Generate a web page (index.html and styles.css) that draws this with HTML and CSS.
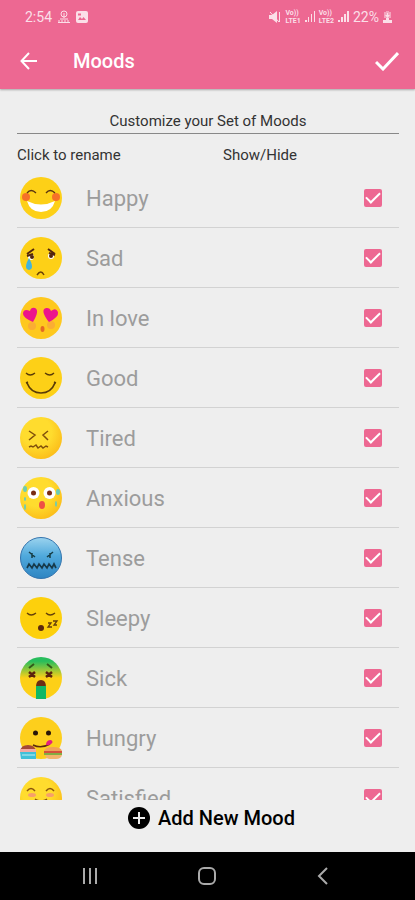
FILE: index.html
```html
<!DOCTYPE html>
<html lang="en">

<head>
    <meta charset="UTF-8">
    <meta name="viewport" content="width=device-width, initial-scale=1.0">
    <title>Moods</title>
    <link rel="stylesheet" href="styles.css">
</head>

<body>
    <header class="header">
        <div class="status">
            <div class="status-group">
                <span>2:54</span>
                <svg width="14" height="14" viewBox="0 0 14 14" fill="none" stroke="currentColor">
                    <circle cx="7" cy="4" r="3" />
                    <path d="M7 3v5M3 9h8M1 12.500h12" />
                    <path d="M1 11h12" stroke-dasharray="2 1" />
                </svg>
                <svg width="12" height="12" viewBox="0 0 12 12">
                    <rect width="12" height="12" rx="2" fill="currentColor" />
                    <path d="M2 9l2-3 2 2 1.500-2L10 9z" fill="#ed6892" />
                    <path d="M2 2.500h3v2H2z" fill="#ed6892" />
                </svg>
            </div>
            <div class="status-group right">
                <svg width="12" height="12" viewBox="0 0 12 12" fill="currentColor">
                    <path d="M0 4h3l5-4v12L3 8H0z" />
                    <path d="M1 1l9 10M10.500 1v10" stroke="currentColor" />
                </svg>
                <span class="lte">Vo))<br>LTE1</span>
                <svg width="10" height="11" viewBox="0 0 10 11" fill="currentColor">
                    <path d="M0 9h2v2H0zM3 6h1v5H3zM6 3h1v8H6zM9 0h1v11H9z" />
                </svg>
                <span class="lte">Vo))<br>LTE2</span>
                <svg width="11" height="11" viewBox="0 0 11 11" fill="currentColor">
                    <path d="M0 9h2v2H0zM3 6h2v5H3zM6 3h2v8H6zM9 0h2v11H9z" />
                </svg>
                <span>22%</span>
                <svg width="9" height="12" viewBox="0 0 9 12" fill="currentColor">
                    <path d="M3 0h3v1h2v6H1V1h2z" opacity=".5" />
                    <path d="M4 2h1v2h2L4.500 7 2 4h2zM0 9h9v3H0zM3 7h3v2H3z" />
                </svg>
            </div>
        </div>
        <div class="toolbar">
            <button class="icon-button" aria-label="Back">
                <svg width="18" height="18" viewBox="0 0 18 18" fill="none" stroke="currentColor" stroke-width="2">
                    <path d="M17 9H2M9 1L1.500 9 9 17" />
                </svg>
            </button>
            <h1>Moods</h1>
            <button class="icon-button" aria-label="Save">
                <svg width="24" height="20" viewBox="0 0 24 20" fill="none" stroke="currentColor" stroke-width="3">
                    <path d="M1 11l7 7L23 2" />
                </svg>
            </button>
        </div>
    </header>

    <main class="content">
        <h2>Customize your Set of Moods</h2>
        <div class="hints">
            <span>Click to rename</span>
            <span>Show/Hide</span>
        </div>

        <ul class="moods">
            <li class="mood">
                <svg class="face" viewBox="0 0 42 42">
                    <circle cx="21" cy="21" r="21" fill="#fdd017" />
                    <circle cx="6" cy="20" r="4" fill="#f4602c" opacity=".85" />
                    <circle cx="36" cy="20" r="4" fill="#f4602c" opacity=".85" />
                    <path d="M7 16q4-5 9 0M26 16q4-5 9 0" fill="none" stroke="#5a3510" stroke-width="1.300" />
                    <path d="M7 24q14 7 28 0-3 11-14 11T7 24z" fill="#fff" />
                </svg>
                <button class="name">Happy</button>
                <input type="checkbox" aria-label="Show Happy" checked>
            </li>
            <li class="mood">
                <svg class="face" viewBox="0 0 42 42">
                    <circle cx="21" cy="21" r="21" fill="#fdd017" />
                    <circle cx="11" cy="20" r="3" fill="#fff" />
                    <circle cx="31" cy="19" r="3" fill="#fff" />
                    <path d="M7 17l7-5M7 19l6-2M35 17l-7-5M35 18l-6-2" stroke="#53260d" stroke-width="2" />
                    <circle cx="12" cy="20" r="2" fill="#53260d" />
                    <circle cx="31" cy="19" r="2" fill="#53260d" />
                    <path d="M9 21q-6 11 0 12 6-1 0-12z" fill="#42b4dc" />
                    <path d="M17 38q4-6 7 0" fill="none" stroke="#6c4308" stroke-width="1.500" />
                </svg>
                <button class="name">Sad</button>
                <input type="checkbox" aria-label="Show Sad" checked>
            </li>
            <li class="mood">
                <svg class="face" viewBox="0 0 42 42">
                    <circle cx="21" cy="21" r="21" fill="#fec81e" />
                    <circle cx="12" cy="29" r="4" fill="#f8a23c" opacity=".7" />
                    <circle cx="31" cy="28" r="4" fill="#f8a23c" opacity=".7" />
                    <path d="M13 25C7 22 3 20 3 16q1-5 7-2 1-4 5-3 5 2-2 14z" fill="#ec148c" />
                    <path d="M29 25C21 15 23 11 27 11q3 0 4 3 5-4 7 1 1 5-9 10z" fill="#ec148c" />
                    <ellipse cx="22.500" cy="32" rx="2" ry="3" fill="#e56a24" />
                </svg>
                <button class="name">In love</button>
                <input type="checkbox" aria-label="Show In love" checked>
            </li>
            <li class="mood">
                <svg class="face" viewBox="0 0 42 42">
                    <circle cx="21" cy="21" r="21" fill="#fdd017" />
                    <g fill="none" stroke="#5a3b08">
                        <path d="M6 16q4 4 9 0M25 16q5 4 9 0" stroke-width="1.300" />
                        <path d="M7 26q4 10 14 10t14-10" stroke-width="1.700" />
                        <path d="M6 26l2-1M34 25l2 1" stroke-width="1.500" />
                    </g>
                </svg>
                <button class="name">Good</button>
                <input type="checkbox" aria-label="Show Good" checked>
            </li>
            <li class="mood">
                <svg class="face" viewBox="0 0 42 42">
                    <radialGradient id="warm" cx=".4" cy=".35" r=".7">
                        <stop offset=".5" stop-color="#ffdc2e" />
                        <stop offset="1" stop-color="#fbbb18" />
                    </radialGradient>
                    <circle cx="21" cy="21" r="21" fill="url(#warm)" />
                    <path d="M9 14l6 4-6 5M28 14l-5 4 5 5M9 30l2-1 2 1 3-2 2 3 3-2 2 2 3-2 2 1" fill="none" stroke="#80500c" stroke-width="1.500" />
                </svg>
                <button class="name">Tired</button>
                <input type="checkbox" aria-label="Show Tired" checked>
            </li>
            <li class="mood">
                <svg class="face" viewBox="0 0 42 42">
                    <circle cx="21" cy="21" r="21" fill="url(#warm)" />
                    <circle cx="13.500" cy="16" r="6" fill="#fff" />
                    <circle cx="29.500" cy="16" r="6" fill="#fff" />
                    <circle cx="13.500" cy="16" r="2.500" fill="#7a2c14" />
                    <circle cx="29.500" cy="16" r="2.500" fill="#7a2c14" />
                    <ellipse cx="22" cy="28" rx="3" ry="4" fill="#ef4f45" />
                    <g fill="#6dccb4">
                        <ellipse cx="5" cy="12" rx="2" ry="3" />
                        <ellipse cx="5" cy="30" rx="1" ry="3" />
                        <ellipse cx="5" cy="22" rx="1" ry="2" />
                        <ellipse cx="38" cy="15" rx="2" ry="3" />
                        <ellipse cx="36" cy="27" rx="1" ry="3" />
                    </g>
                </svg>
                <button class="name">Anxious</button>
                <input type="checkbox" aria-label="Show Anxious" checked>
            </li>
            <li class="mood">
                <svg class="face" viewBox="0 0 42 42">
                    <linearGradient id="cold" x2="0" y2="1">
                        <stop offset="0" stop-color="#9bd3ee" />
                        <stop offset=".45" stop-color="#4fa9dc" />
                        <stop offset="1" stop-color="#2f85c2" />
                    </linearGradient>
                    <circle cx="21" cy="21" r="20.500" fill="url(#cold)" stroke="#3474ae" />
                    <path d="M9 15l6 5M33 15l-6 5M12 16v5M30 16v5" stroke="#173e45" stroke-width="1.500" />
                    <path d="M7 31l2-4 3 4 2-4 3 4 2-4 3 4 2-4 3 4 2-4 3 4 2-4 2 4" fill="none" stroke="#173a4a" stroke-width="1.700" />
                </svg>
                <button class="name">Tense</button>
                <input type="checkbox" aria-label="Show Tense" checked>
            </li>
            <li class="mood">
                <svg class="face" viewBox="0 0 42 42">
                    <circle cx="21" cy="21" r="21" fill="#fdd00c" />
                    <path d="M7 16q4 4 9 0M26 16q4 4 9 0M28 26h3l-3 4h4M33 24h4l-3 4h3" fill="none" stroke="#65400a" stroke-width="1.300" />
                    <circle cx="21" cy="31" r="3" fill="#5c290e" />
                </svg>
                <button class="name">Sleepy</button>
                <input type="checkbox" aria-label="Show Sleepy" checked>
            </li>
            <li class="mood">
                <svg class="face" viewBox="0 0 42 42">
                    <linearGradient id="ill" x2="0" y2="1">
                        <stop offset=".1" stop-color="#28bd5c" />
                        <stop offset=".5" stop-color="#fdd017" />
                    </linearGradient>
                    <circle cx="21" cy="21" r="21" fill="url(#ill)" />
                    <path d="M9 11l5-4M27 7l5 4" stroke="#32591a" stroke-width="2" />
                    <path d="M9 15l6 5M15 15l-6 5M26 15l6 5M32 15l-6 5" stroke="#5a230d" stroke-width="2.500" />
                    <path d="M16 30q0-7 5-7t5 7z" fill="#6d2d14" />
                    <path d="M16 29h10v13H16z" fill="#0fb865" />
                </svg>
                <button class="name">Sick</button>
                <input type="checkbox" aria-label="Show Sick" checked>
            </li>
            <li class="mood">
                <svg class="face" viewBox="0 0 42 42">
                    <circle cx="21" cy="21" r="21" fill="#fdcf1c" />
                    <circle cx="15.500" cy="16" r="2.500" fill="#2a1708" />
                    <circle cx="28.500" cy="16" r="2.500" fill="#2a1708" />
                    <path d="M13 28q8 4 17-1" fill="none" stroke="#5b2a0d" stroke-width="1.500" />
                    <path d="M26 28q0-5 5-5 3 2 0 4t-5 1z" fill="#e3207f" />
                    <path d="M0 34q1-6 8-6t8 6z" fill="#a54836" />
                    <path d="M0 32h16v4H0z" fill="#f2a9a4" />
                    <path d="M0 35h16v7H1z" fill="#3fc0d8" />
                    <path d="M2 38h13" stroke="#c2edf2" />
                    <path d="M24 34q1-4 9-4t9 4z" fill="#f1a258" />
                    <path d="M24 34h18v3H24z" fill="#d6513c" />
                    <path d="M24 36h18v2H24z" fill="#84ad42" />
                    <path d="M25 38h17q-1 4-6 4h-6q-4 0-5-4z" fill="#f3b46c" />
                </svg>
                <button class="name">Hungry</button>
                <input type="checkbox" aria-label="Show Hungry" checked>
            </li>
            <li class="mood">
                <svg class="face" viewBox="0 0 42 42">
                    <circle cx="21" cy="21" r="21" fill="url(#warm)" />
                    <ellipse cx="12" cy="18" rx="4" ry="2" fill="#f7a06a" />
                    <ellipse cx="30" cy="18" rx="4" ry="2" fill="#f7a06a" />
                    <path d="M7 14q4-5 8 0M26 14q4-5 8 0M15 22q6 4 12 0" fill="none" stroke="#8a540d" stroke-width="1.500" />
                </svg>
                <button class="name">Satisfied</button>
                <input type="checkbox" aria-label="Show Satisfied" checked>
            </li>
        </ul>
    </main>

    <footer class="footer">
        <button class="add">
            <svg width="22" height="22" viewBox="0 0 22 22">
                <circle cx="11" cy="11" r="11" fill="#000" />
                <path d="M11 5v12M5 11h12" stroke="#eee" stroke-width="2" />
            </svg>
            Add New Mood
        </button>
    </footer>

    <nav class="navbar">
        <button aria-label="Recent apps">
            <svg width="18" height="18" viewBox="0 0 18 18" stroke="currentColor" stroke-width="2">
                <path d="M3 1v16M9 1v16M15 1v16" />
            </svg>
        </button>
        <button aria-label="Home">
            <svg width="20" height="20" viewBox="0 0 20 20" fill="none" stroke="currentColor" stroke-width="2">
                <rect x="2" y="2" width="16" height="16" rx="5" />
            </svg>
        </button>
        <button aria-label="Back">
            <svg width="18" height="18" viewBox="0 0 18 18" fill="none" stroke="currentColor" stroke-width="2">
                <path d="M13 1L5 9l8 8" />
            </svg>
        </button>
    </nav>
</body>

</html>
```
FILE: styles.css
```css
* {
    box-sizing: border-box;
}

body {
    display: flex;
    flex-direction: column;
    height: 100vh;
    margin: 0;
    background-color: #eee;
    color: #333;
    font-family: Roboto, sans-serif;
    font-size: 15px;
}

h1,
h2,
ul {
    margin: 0;
    padding: 0;
}

button {
    padding: 0;
    border: none;
    background: none;
    color: inherit;
    font: inherit;
    cursor: pointer;
}

svg {
    display: block;
    flex-shrink: 0;
}

.header {
    background-color: #ed6892;
    color: #fff;
    box-shadow: 0 1px 2px rgba(0, 0, 0, 0.3);
}

.status {
    display: flex;
    justify-content: space-between;
    align-items: center;
    height: 33px;
    padding: 0 23px 0 25px;
    font-size: 14px;
    color: #fbdfe8;
}

.status-group {
    display: flex;
    align-items: center;
    gap: 5px;
}

.status-group.right {
    gap: 4px;
}

.lte {
    font-size: 7px;
    font-weight: 700;
    line-height: 8px;
}

.toolbar {
    display: flex;
    align-items: center;
    height: 56px;
    padding: 0 16px 0 20px;
}

.toolbar h1 {
    flex: 1;
    margin-left: 35px;
    font-size: 20px;
    font-weight: 500;
}

.content {
    display: flex;
    flex: 1;
    flex-direction: column;
    min-height: 0;
    padding: 20px 16px 0 17px;
}

.content h2 {
    border-bottom: 1px solid #888;
    font-size: 15px;
    font-weight: 400;
    line-height: 24px;
    text-align: center;
}

.hints {
    display: grid;
    grid-template-columns: 1fr 1fr;
    gap: 30px;
    padding: 10px 0 2px;
    line-height: 22px;
}

.moods {
    flex: 1;
    min-height: 0;
    overflow-y: auto;
    scrollbar-width: none;
    list-style: none;
}

.mood {
    display: flex;
    align-items: center;
    height: 60px;
    padding: 0 17px 0 3px;
    border-bottom: 1px solid #d2d2d2;
}

.face {
    width: 42px;
    height: 42px;
}

.name {
    flex: 1;
    margin-left: 24px;
    padding-top: 2px;
    color: #9c9c9c;
    font-size: 22px;
    text-align: left;
}

.mood input {
    display: grid;
    place-items: center;
    width: 18px;
    height: 18px;
    margin: 0;
    border: 2px solid #ed6892;
    border-radius: 2px;
    appearance: none;
}

.mood input:checked {
    background-color: #ed6892;
}

.mood input:checked::before {
    content: "";
    width: 12px;
    height: 6px;
    border: solid #fff;
    border-width: 0 0 2px 2px;
    transform: translateY(-2px) rotate(-45deg);
}

.footer {
    display: flex;
    justify-content: center;
    padding: 0 0 16px 8px;
}

.add {
    display: flex;
    align-items: center;
    gap: 8px;
    height: 36px;
    color: #000;
    font-size: 20px;
    font-weight: 500;
}

.navbar {
    display: flex;
    justify-content: space-between;
    align-items: center;
    height: 48px;
    padding: 0 83px 0 81px;
    background-color: #000;
    color: #aaa;
}
```
